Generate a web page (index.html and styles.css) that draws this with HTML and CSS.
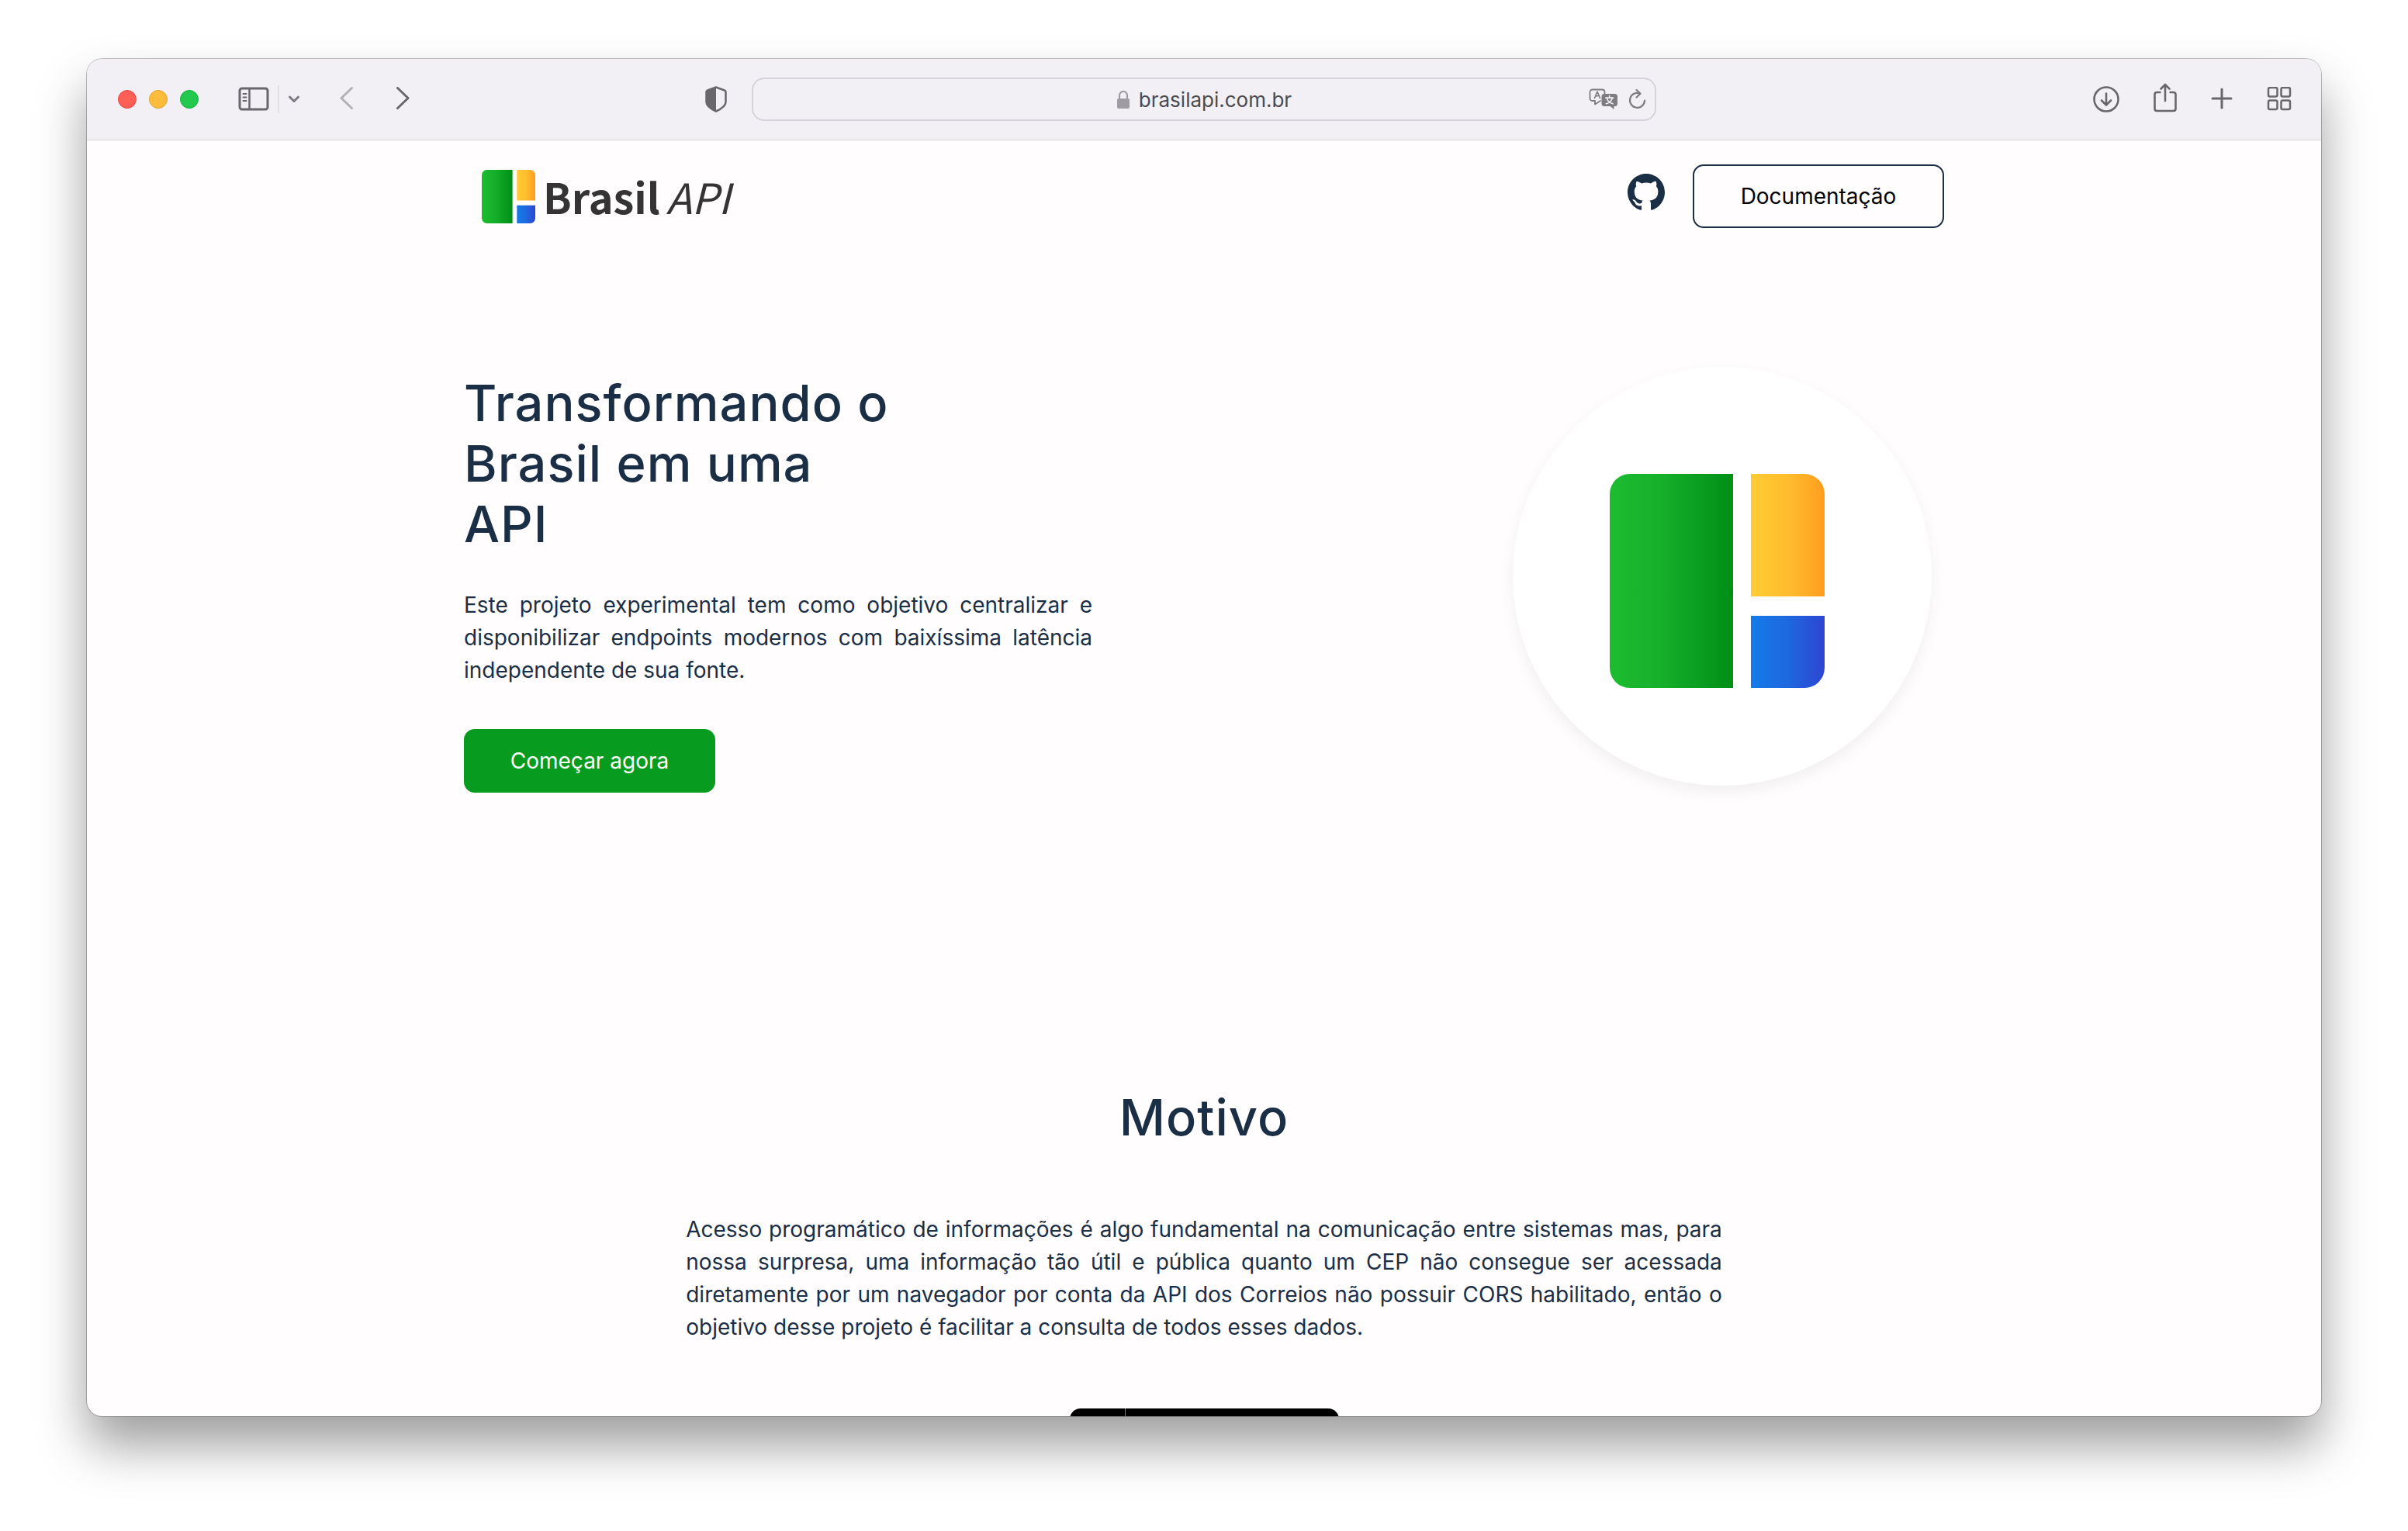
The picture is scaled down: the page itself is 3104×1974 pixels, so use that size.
FILE: index.html
```html
<!DOCTYPE html>
<html lang="pt-BR">
<head>
<meta charset="utf-8">
<title>Brasil API</title>
<link rel="stylesheet" href="styles.css">
</head>
<body>
<svg class="defs" aria-hidden="true">
  <defs>
    <linearGradient id="green"><stop offset="0" stop-color="#1cbc30"/><stop offset=".4" stop-color="#17b02b"/><stop offset="1" stop-color="#008e17"/></linearGradient>
    <linearGradient id="yellow"><stop offset="0" stop-color="#ffcb33"/><stop offset=".5" stop-color="#ffbd2d"/><stop offset="1" stop-color="#ff9d1e"/></linearGradient>
    <linearGradient id="blue"><stop offset="0" stop-color="#157be9"/><stop offset=".5" stop-color="#1e68de"/><stop offset="1" stop-color="#2e45d2"/></linearGradient>
    <symbol id="mark" viewBox="0 0 277 276">
      <path fill="url(#green)" d="M26 0H159V276H26A26 26 0 0 1 0 250V26A26 26 0 0 1 26 0Z"/>
      <path fill="url(#yellow)" d="M182 0H251A26 26 0 0 1 277 26V158H182Z"/>
      <path fill="url(#blue)" d="M182 183H277V250A26 26 0 0 1 251 276H182Z"/>
    </symbol>
  </defs>
</svg>
<div class="window">
  <header class="toolbar">
    <div class="tools tools-left">
      <div class="lights">
        <button class="light close" aria-label="Fechar"></button>
        <button class="light minimize" aria-label="Minimizar"></button>
        <button class="light maximize" aria-label="Maximizar"></button>
      </div>
      <div class="sidebar-tools">
        <button class="tool" aria-label="Barra lateral">
          <svg width="40" height="32" viewBox="0 0 40 32" fill="none" stroke="#69666c" stroke-width="3"><rect x="2" y="2" width="36" height="27" rx="3"/><path d="M14.500 2V29" stroke-width="2.500"/><path d="M6.500 9H10.500M6.500 13.500H10.500M6.500 18H10.500" stroke-width="2" stroke-linecap="round"/></svg>
        </button>
        <span class="divider"></span>
        <button class="tool" aria-label="Grupos de abas">
          <svg width="16" height="12" viewBox="0 0 16 12" fill="none" stroke="#7c7982" stroke-width="3" stroke-linecap="round" stroke-linejoin="round"><path d="M2.500 3L8 8.500L13.500 3"/></svg>
        </button>
      </div>
      <div class="history">
        <button class="tool" aria-label="Voltar">
          <svg width="20" height="32" viewBox="0 0 20 32" fill="none" stroke="#b4b1b6" stroke-width="3" stroke-linecap="round" stroke-linejoin="round"><path d="M16.500 1.500L3 14.500L16.500 27.500"/></svg>
        </button>
        <button class="tool" aria-label="Avançar">
          <svg width="20" height="32" viewBox="0 0 20 32" fill="none" stroke="#69666c" stroke-width="3" stroke-linecap="round" stroke-linejoin="round"><path d="M3.500 1.500L17 14.500L3.500 27.500"/></svg>
        </button>
      </div>
      <button class="tool shield" aria-label="Relatório de privacidade">
        <svg width="28" height="34" viewBox="0 0 28 34"><path d="M14 1.500L25 5.500Q26.500 6 26.500 7.500V20.500C26.500 26 20.500 29.500 14 32.500C7.500 29.500 1.500 26 1.500 20.500V7.500Q1.500 6 3 5.500Z" fill="none" stroke="#69666c" stroke-width="2.500" stroke-linejoin="round"/><path d="M14 1.500V32.500C7.500 29.500 1.500 26 1.500 20.500V7.500Q1.500 6 3 5.500Z" fill="#69666c"/></svg>
      </button>
    </div>
    <div class="address">
      <label class="url">
        <svg width="18" height="26" viewBox="0 0 18 26"><path d="M4 12V7.500C4 0 14 0 14 7.500V12" fill="none" stroke="#9f9ca3" stroke-width="2.200"/><rect x="1" y="11" width="16" height="13" rx="2" fill="#9f9ca3"/></svg>
        <input type="text" value="brasilapi.com.br" size="16" aria-label="Endereço">
      </label>
      <div class="address-actions">
        <button class="tool" aria-label="Traduzir">
          <svg width="38" height="28" viewBox="0 0 38 28" fill="none" stroke="#7e7c80" stroke-linecap="round" stroke-linejoin="round"><path d="M15 16L8 20.500V16H5Q1.500 16 1.500 12.500V5Q1.500 1.500 5 1.500H17Q20.500 1.500 20.500 5V6.500" stroke-width="1.800"/><path d="M7.500 12.500L11 4L14.500 12.500M8.700 9.800H13.300" stroke-width="1.600"/><path d="M20 7H33.500Q37 7 37 10.500V19.500Q37 23 33.500 23H32.500V27L27.500 23H20Q16.500 23 16.500 19.500V10.500Q16.500 7 20 7Z" fill="#7e7c80" stroke="none"/><path d="M26.700 9.500V12M22 12.200H31.500M23.500 13.500C25 17 28 19 31 19.800M30 13.500C28.500 17 25.500 19 22.500 19.800" stroke="#f2f0f5" stroke-width="1.700"/></svg>
        </button>
        <button class="tool" aria-label="Recarregar">
          <svg width="24" height="28" viewBox="0 0 24 28" fill="none" stroke="#7e7c80" stroke-width="2.200" stroke-linecap="round" stroke-linejoin="round"><path d="M21 15.500A9.500 9.500 0 1 1 15 6.500"/><path d="M10.500 2L15.500 6.800L10.500 11.500"/></svg>
        </button>
      </div>
    </div>
    <div class="tools tools-right">
      <button class="tool" aria-label="Downloads">
        <svg width="34" height="34" viewBox="0 0 34 34" fill="none" stroke="#69666c" stroke-width="2.600" stroke-linecap="round" stroke-linejoin="round"><circle cx="17" cy="17" r="15.500"/><path d="M17 9.500V24M11 18.500L17 24.500L23 18.500"/></svg>
      </button>
      <button class="tool" aria-label="Compartilhar">
        <svg width="30" height="42" viewBox="1 0 30 42" fill="none" stroke="#69666c" stroke-width="2.600" stroke-linecap="round" stroke-linejoin="round"><path d="M10.500 12H5.500Q2.500 12 2.500 15V33Q2.500 36 5.500 36H26.500Q29.500 36 29.500 33V15Q29.500 12 26.500 12H21.500" stroke-linecap="butt"/><path d="M16 23V2.500M10.500 7.500L16 2L21.500 7.500"/></svg>
      </button>
      <button class="tool" aria-label="Nova aba">
        <svg width="28" height="30" viewBox="0 0 28 30" fill="none" stroke="#69666c" stroke-width="3" stroke-linecap="round"><path d="M14 2V26M2 14H26"/></svg>
      </button>
      <button class="tool" aria-label="Visão geral das abas">
        <svg width="32" height="32" viewBox="0 0 32 32" fill="none" stroke="#69666c" stroke-width="2.500"><rect x="2" y="1" width="11.500" height="11.500" rx="2"/><rect x="18.500" y="1" width="11.500" height="11.500" rx="2"/><rect x="2" y="17.500" width="11.500" height="11.500" rx="2"/><rect x="18.500" y="17.500" width="11.500" height="11.500" rx="2"/></svg>
      </button>
    </div>
  </header>

  <div class="page">
    <div class="container">
      <nav class="site-header">
        <a class="logo" href="#">
          <svg width="69" height="69" viewBox="0 0 69 69"><use href="#mark"/></svg>
          <span class="logo-text"><b>Brasil</b><i>API</i></span>
        </a>
        <div class="site-links">
          <a class="github" href="#" aria-label="GitHub">
            <svg width="48" height="48" viewBox="0 0 16 16" fill="#1a2e46"><path d="M8 0C3.580 0 0 3.580 0 8c0 3.540 2.290 6.530 5.470 7.590.4.070.55-.17.55-.38 0-.19-.01-.82-.01-1.490-2.010.37-2.530-.49-2.690-.94-.09-.23-.48-.94-.82-1.130-.28-.15-.68-.52-.01-.53.63-.01 1.080.58 1.230.82.72 1.210 1.870.87 2.330.66.07-.52.28-.87.51-1.070-1.780-.2-3.640-.89-3.640-3.950 0-.87.31-1.590.82-2.150-.08-.2-.36-1.020.08-2.120 0 0 .67-.21 2.200.82.64-.18 1.320-.27 2-.27s1.360.09 2 .27c1.530-1.040 2.200-.82 2.200-.82.44 1.100.16 1.920.08 2.120.51.56.82 1.270.82 2.150 0 3.070-1.870 3.750-3.650 3.950.29.25.54.73.54 1.480 0 1.070-.01 1.930-.01 2.200 0 .21.15.46.55.38A8.010 8.010 0 0 0 16 8c0-4.420-3.580-8-8-8z"/></svg>
          </a>
          <a class="button button-outline" href="#">Documentação</a>
        </div>
      </nav>

      <section class="hero">
        <div class="hero-text">
          <h1>Transformando o Brasil em uma API</h1>
          <p>Este projeto experimental tem como objetivo centralizar e disponibilizar endpoints modernos com baixíssima latência independente de sua fonte.</p>
          <a class="button button-primary" href="#">Começar agora</a>
        </div>
        <div class="hero-mark">
          <svg viewBox="0 0 540 540"><use href="#mark" x="125" y="138" width="277" height="276"/></svg>
        </div>
      </section>

      <section class="reason">
        <h2>Motivo</h2>
        <p>Acesso programático de informações é algo fundamental na comunicação entre sistemas mas, para nossa surpresa, uma informação tão útil e pública quanto um CEP não consegue ser acessada diretamente por um navegador por conta da API dos Correios não possuir CORS habilitado, então o objetivo desse projeto é facilitar a consulta de todos esses dados.</p>
        <a class="deploy" href="#" aria-label="Deploy"><span class="deploy-icon"></span></a>
      </section>
    </div>
  </div>
</div>
</body>
</html>
```
FILE: styles.css
```css
* {
  box-sizing: border-box;
}

body {
  margin: 0;
  height: 100vh;
  padding: 76px 112px 148px;
  background: #fff;
  color: #1a2e46;
  font-family: Inter, "Liberation Sans", sans-serif;
  font-size: 28px;
  line-height: 42px;
  font-optical-sizing: none;
}

svg {
  display: block;
}

.defs {
  position: absolute;
  width: 0;
  height: 0;
}

a {
  color: inherit;
  text-decoration: none;
}

h1,
h2 {
  margin: 0;
  font-size: 65px;
  line-height: 78px;
  font-weight: 500;
  letter-spacing: 1px;
}

p {
  margin: 0;
  text-align: justify;
}

/* Browser window */

.window {
  display: flex;
  flex-direction: column;
  height: 100%;
  overflow: hidden;
  border-radius: 20px;
  background: #fffdfe;
  box-shadow: 0 0 0 1px rgba(0, 0, 0, .24), 0 38px 64px rgba(0, 0, 0, .38);
}

.toolbar {
  display: grid;
  grid-template-columns: 1fr 40.500% 1fr;
  align-items: center;
  flex: none;
  height: 105px;
  border-bottom: 1px solid #d5d3d7;
  background: #f2f0f5;
}

.tools {
  display: flex;
  align-items: center;
}

.tool {
  padding: 0;
  border: 0;
  background: none;
}

.tools-left {
  padding: 0 32px 0 40px;
}

.lights {
  display: flex;
  gap: 16px;
}

.light {
  width: 24px;
  height: 24px;
  padding: 0;
  border: 1px solid;
  border-radius: 50%;
}

.close {
  border-color: #e8463f;
  background: #ff5f57;
}

.minimize {
  border-color: #e0a033;
  background: #febc3c;
}

.maximize {
  border-color: #13b03a;
  background: #22c94c;
}

.sidebar-tools {
  display: flex;
  align-items: center;
  gap: 11px;
  margin-left: 51px;
}

.divider {
  width: 2px;
  height: 36px;
  background: #e2e0e5;
}

.history {
  display: flex;
  gap: 52px;
  margin-left: 50px;
}

.shield {
  margin-left: auto;
}

.tools-right {
  justify-content: flex-end;
  gap: 44px;
  padding-right: 38px;
}

.address {
  display: grid;
  grid-template-columns: 1fr auto 1fr;
  align-items: center;
  height: 56px;
  padding: 0 10px;
  border: 2px solid #d5d2d9;
  border-radius: 16px;
}

.url {
  grid-column: 2;
  display: flex;
  align-items: center;
  gap: 11px;
  padding-top: 2px;
}

.url input {
  field-sizing: content;
  padding: 0;
  border: 0;
  outline: 0;
  background: none;
  color: #4c4a4e;
  font: inherit;
  font-size: 26px;
}

.address-actions {
  display: flex;
  justify-content: flex-end;
  gap: 13px;
}

/* Site */

.page {
  flex: 1;
  min-height: 0;
  overflow: hidden;
}

.container {
  width: 100%;
  max-width: 1908px;
  margin: 0 auto;
}

.button {
  display: inline-block;
  min-width: 324px;
  padding: 18px 40px;
  border: 2px solid;
  border-radius: 14px;
  text-align: center;
}

.button-outline {
  border-color: #1a2e46;
  color: #000;
}

.button-primary {
  border-color: #079b20;
  background: #079b20;
  color: #fff;
}

.site-header {
  display: flex;
  justify-content: space-between;
  align-items: center;
  padding: 31px 0 0 23px;
}

.logo {
  display: flex;
  align-items: center;
  gap: 10px;
}

.logo-text {
  display: flex;
  gap: 8px;
  color: #343434;
  font-family: "Noto Sans CJK JP", "Noto Sans", sans-serif;
  font-size: 54px;
  line-height: 70px;
}

.logo-text i {
  font-weight: 400;
}

.site-links {
  display: flex;
  align-items: flex-start;
  gap: 36px;
}

.github {
  padding: 12px 0;
}

.hero {
  display: flex;
  justify-content: space-between;
  align-items: flex-start;
  padding: 179px 16px 0 0;
}

.hero-text {
  max-width: 810px;
  padding-top: 8px;
}

.hero-text h1 {
  max-width: 570px;
  margin-bottom: 44px;
}

.hero-text p {
  margin-bottom: 55px;
}

.hero-text .button {
  display: block;
  width: 324px;
}

.hero-mark {
  flex: none;
  width: 540px;
  border-radius: 50%;
  background: #fff;
  box-shadow: 0 8px 20px rgba(0, 0, 0, .06);
}

.reason {
  display: flex;
  flex-direction: column;
  align-items: center;
  gap: 84px;
  width: 70%;
  margin: 380px auto 0;
}

.deploy {
  width: 347px;
  height: 72px;
  border-radius: 14px;
  background: #000;
}

.deploy-icon {
  display: block;
  width: 72px;
  height: 100%;
  border-right: 1px solid #777;
}
```
